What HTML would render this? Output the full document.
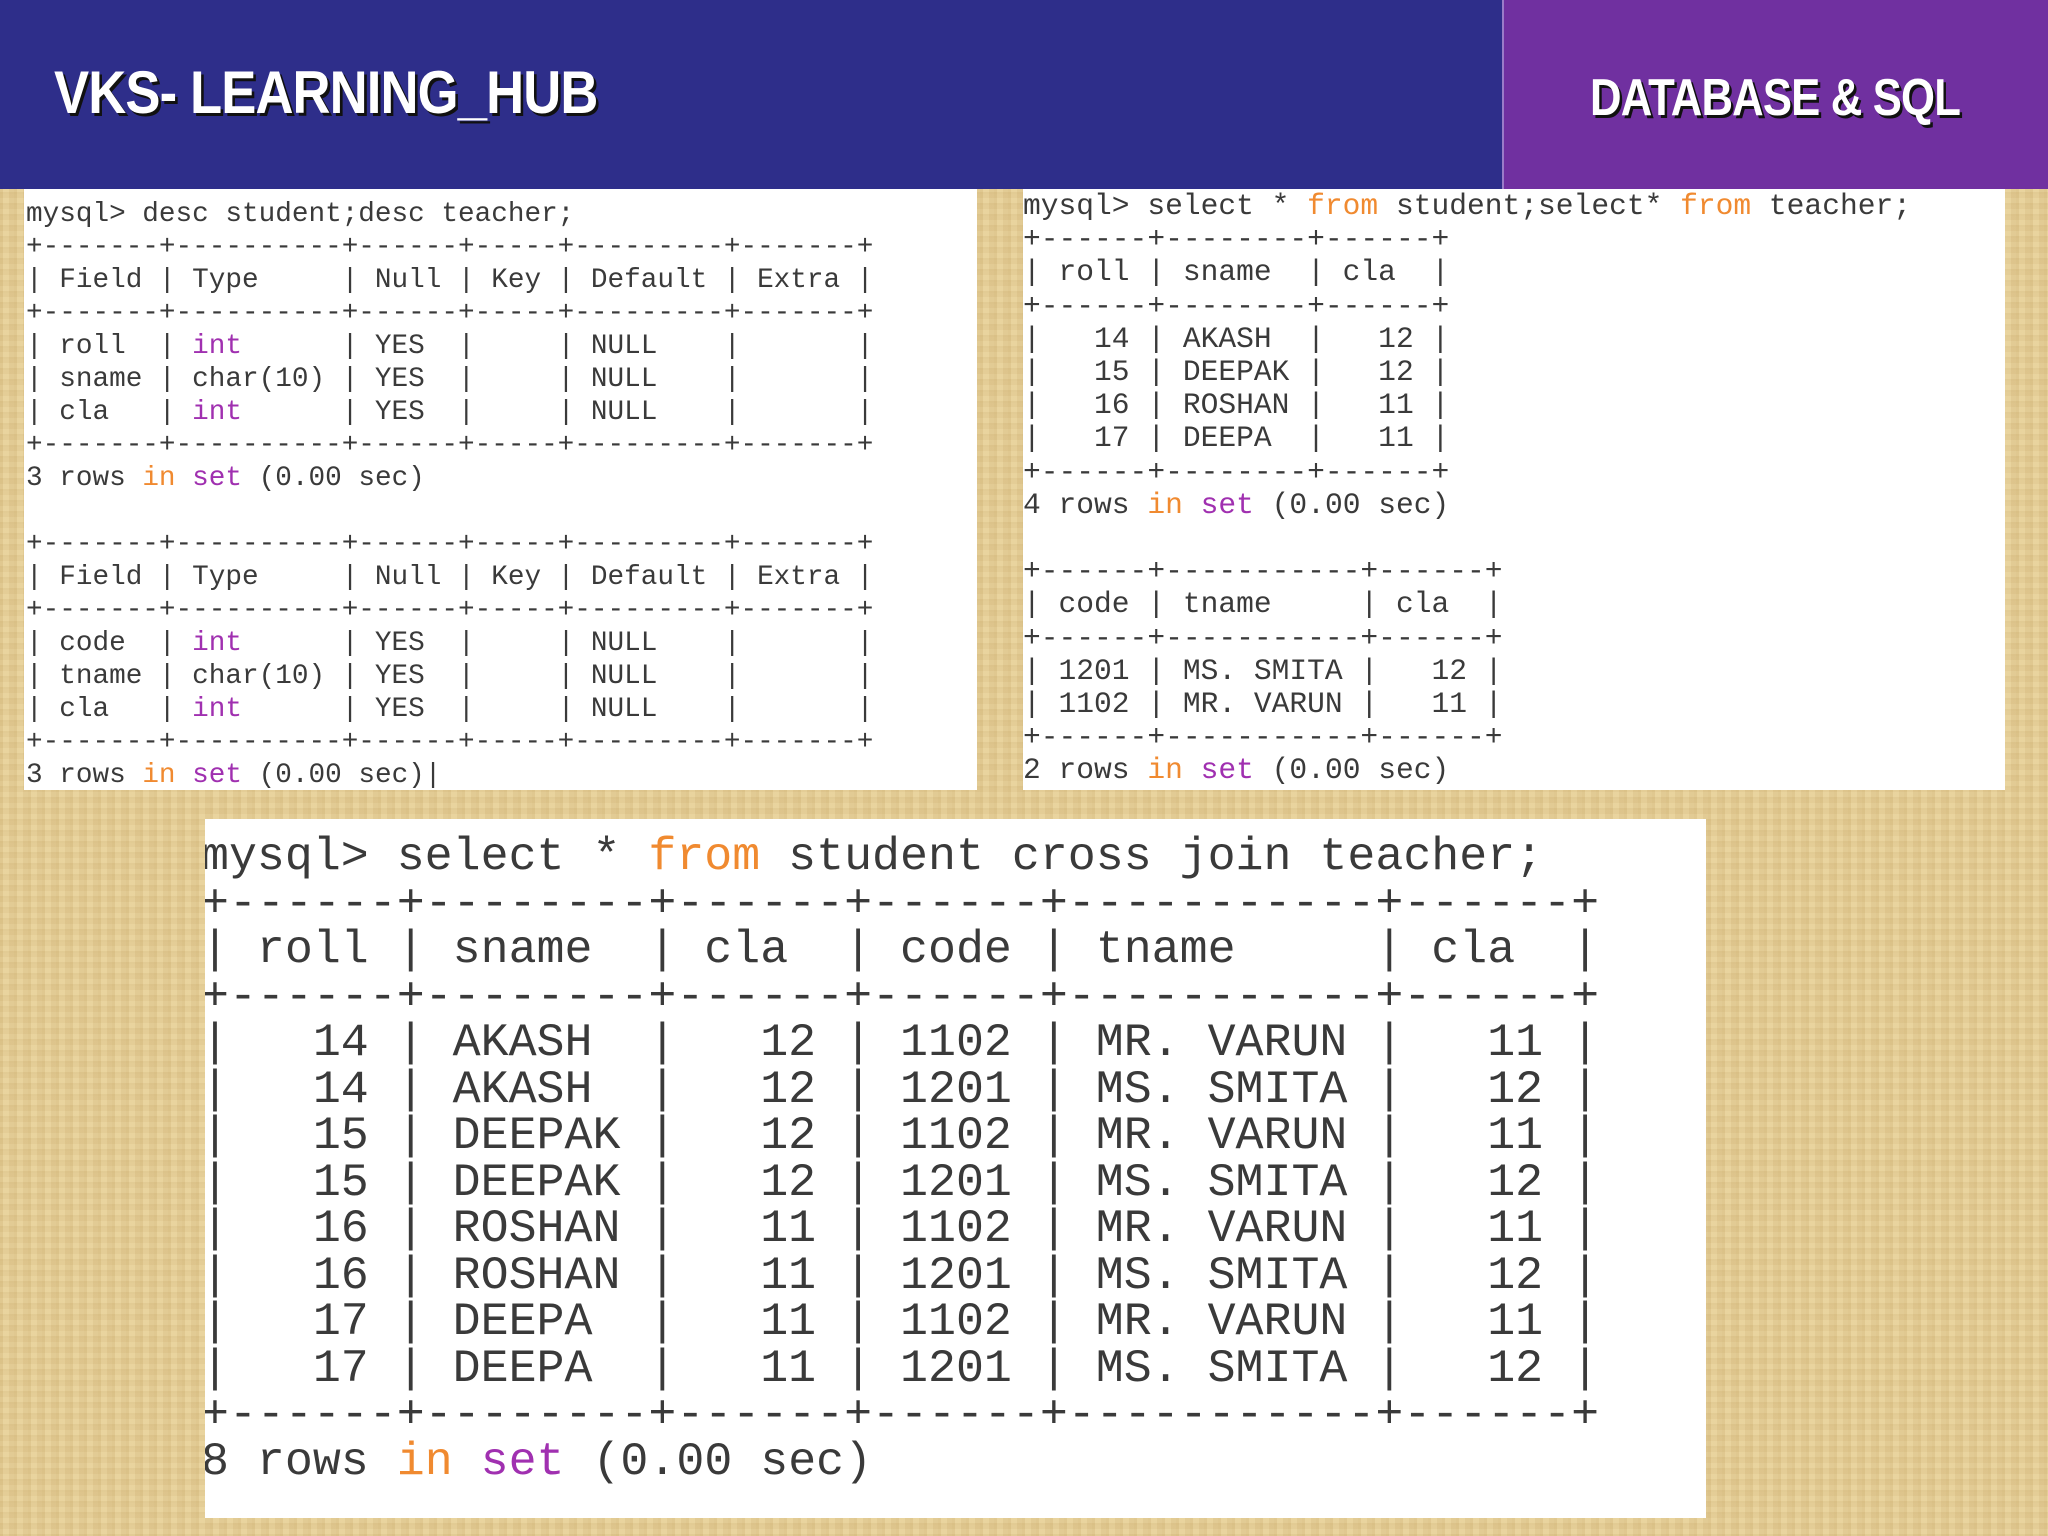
<!DOCTYPE html>
<html><head><meta charset="utf-8"><style>
html,body{margin:0;padding:0}
body{width:2048px;height:1536px;position:relative;overflow:hidden;
background:#e6cf98;
background-image:
repeating-linear-gradient(90deg,rgba(160,120,50,.10) 0 3px,rgba(255,240,200,.08) 3px 9px,rgba(150,110,40,.06) 9px 14px),
repeating-linear-gradient(0deg,rgba(160,120,50,.08) 0 2px,rgba(255,240,200,.06) 2px 7px,rgba(150,110,40,.05) 7px 11px);}
.hdr{position:absolute;left:0;top:0;width:1502px;height:189px;background:#2e2e8a;}
.hdr2{position:absolute;left:1502px;top:0;width:546px;height:189px;background:#7030a0;border-left:2px solid #9a7cc8;box-sizing:border-box}
.t1{position:absolute;left:54px;top:58px;font:bold 60px "Liberation Sans",sans-serif;color:#fff;text-shadow:3px 3px 0 #111;letter-spacing:-1px;transform:scaleX(0.877);transform-origin:left}
.t2{position:absolute;left:1590px;top:68px;font:bold 52px "Liberation Sans",sans-serif;color:#fff;text-shadow:3px 3px 0 #111;letter-spacing:-1px;transform:scaleX(0.84);transform-origin:left}
.p{position:absolute;background:#fff;overflow:hidden}
pre{margin:0;position:absolute;font-family:"Liberation Mono",monospace;color:#3a3a3a;white-space:pre}
.o{color:#f08a30}.m{color:#a030b0}
</style></head><body>
<div class="hdr"></div><div class="hdr2"></div>
<div class="t1">VKS- LEARNING_HUB</div>
<div class="t2">DATABASE &amp; SQL</div>

<div class="p" style="left:24px;top:189px;width:953px;height:601px">
<pre style="left:2px;top:9px;font-size:27.7px;line-height:33px">mysql&gt; desc student;desc teacher;
+-------+----------+------+-----+---------+-------+
| Field | Type     | Null | Key | Default | Extra |
+-------+----------+------+-----+---------+-------+
| roll  | <span class="m">int</span>      | YES  |     | NULL    |       |
| sname | char(10) | YES  |     | NULL    |       |
| cla   | <span class="m">int</span>      | YES  |     | NULL    |       |
+-------+----------+------+-----+---------+-------+
3 rows <span class="o">in</span> <span class="m">set</span> (0.00 sec)

+-------+----------+------+-----+---------+-------+
| Field | Type     | Null | Key | Default | Extra |
+-------+----------+------+-----+---------+-------+
| code  | <span class="m">int</span>      | YES  |     | NULL    |       |
| tname | char(10) | YES  |     | NULL    |       |
| cla   | <span class="m">int</span>      | YES  |     | NULL    |       |
+-------+----------+------+-----+---------+-------+
3 rows <span class="o">in</span> <span class="m">set</span> (0.00 sec)|</pre></div>

<div class="p" style="left:1023px;top:189px;width:982px;height:601px">
<pre style="left:0;top:1px;font-size:29.6px;line-height:33.2px">mysql&gt; select * <span class="o">from</span> student;select* <span class="o">from</span> teacher;
+------+--------+------+
| roll | sname  | cla  |
+------+--------+------+
|   14 | AKASH  |   12 |
|   15 | DEEPAK |   12 |
|   16 | ROSHAN |   11 |
|   17 | DEEPA  |   11 |
+------+--------+------+
4 rows <span class="o">in</span> <span class="m">set</span> (0.00 sec)

+------+-----------+------+
| code | tname     | cla  |
+------+-----------+------+
| 1201 | MS. SMITA |   12 |
| 1102 | MR. VARUN |   11 |
+------+-----------+------+
2 rows <span class="o">in</span> <span class="m">set</span> (0.00 sec)</pre></div>

<div class="p" style="left:205px;top:819px;width:1501px;height:699px">
<pre style="left:-4px;top:15px;font-size:46.6px;line-height:46.5px">mysql&gt; select * <span class="o">from</span> student cross join teacher;
+------+--------+------+------+-----------+------+
| roll | sname  | cla  | code | tname     | cla  |
+------+--------+------+------+-----------+------+
|   14 | AKASH  |   12 | 1102 | MR. VARUN |   11 |
|   14 | AKASH  |   12 | 1201 | MS. SMITA |   12 |
|   15 | DEEPAK |   12 | 1102 | MR. VARUN |   11 |
|   15 | DEEPAK |   12 | 1201 | MS. SMITA |   12 |
|   16 | ROSHAN |   11 | 1102 | MR. VARUN |   11 |
|   16 | ROSHAN |   11 | 1201 | MS. SMITA |   12 |
|   17 | DEEPA  |   11 | 1102 | MR. VARUN |   11 |
|   17 | DEEPA  |   11 | 1201 | MS. SMITA |   12 |
+------+--------+------+------+-----------+------+
8 rows <span class="o">in</span> <span class="m">set</span> (0.00 sec)</pre></div>
</body></html>
